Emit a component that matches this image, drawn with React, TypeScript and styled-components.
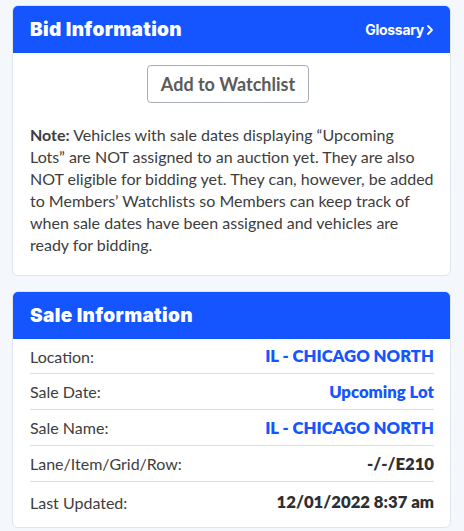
import React from "react";
import styled, { createGlobalStyle } from "styled-components";

const Global = createGlobalStyle`
  html, body { margin: 0; padding: 0; background: #f4f7fc; }
  body { font-family: Lato, "Open Sans", sans-serif; }
  * { box-sizing: border-box; }
`;

const Page = styled.div`
  padding: 5px 13px 8px 12px;
  display: flex;
  flex-direction: column;
  gap: 15px;
`;

const Card = styled.section`
  background: #fff;
  border: 1px solid #e1e5ec;
  border-radius: 6px;
  overflow: hidden;
`;

const Header = styled.header`
  background: #1555ff;
  height: 47px;
  display: flex;
  align-items: center;
  justify-content: space-between;
  padding: 0 16px 0 17px;
`;

const Title = styled.h2`
  margin: 0;
  color: #fff;
  font-family: Inter, sans-serif;
  font-weight: 900;
  font-size: 19px;
  letter-spacing: 0.35px;
`;

const HeaderLink = styled.a`
  color: #fff;
  font-family: Inter, sans-serif;
  font-weight: 700;
  font-size: 14px;
  display: flex;
  align-items: center;
  gap: 2px;
  letter-spacing: -0.3px;
`;

const BidBody = styled.div`
  padding: 12px 14px 19px 17px;
  display: flex;
  flex-direction: column;
  align-items: center;
`;

const Button = styled.button`
  height: 38px;
  padding: 0 13px;
  margin-right: 10px;
  border: 1px solid #a7adb7;
  border-radius: 4px;
  background: #fff;
  color: #5b5b5b;
  font-family: Lato, sans-serif;
  font-weight: 700;
  font-size: 18px;
`;

const Note = styled.p`
  margin: 21px 0 0;
  color: #3d3d3d;
  font-size: 16px;
  line-height: 22px;
  align-self: stretch;
  b { font-weight: 700; }
`;

const Rows = styled.div`
  padding: 0 16px 5px 17px;
`;

const Row = styled.div`
  display: flex;
  justify-content: space-between;
  align-items: center;
  height: 36px;
  border-bottom: 1px solid #dcdee2;
  font-size: 16px;
  &:first-child { height: 35px; }
  &:last-child { border-bottom: none; height: 40px; }
`;

const Label = styled.span`
  color: #3d3d3d;
`;

const Value = styled.span<{ $blue?: boolean }>`
  font-weight: 800;
  font-size: 16.7px;
  color: ${(p) => (p.$blue ? "#1555ff" : "#2f2f33")};
`;

const rows: { label: string; value: string; blue?: boolean }[] = [
  { label: "Location:", value: "IL - CHICAGO NORTH", blue: true },
  { label: "Sale Date:", value: "Upcoming Lot", blue: true },
  { label: "Sale Name:", value: "IL - CHICAGO NORTH", blue: true },
  { label: "Lane/Item/Grid/Row:", value: "-/-/E210" },
  { label: "Last Updated:", value: "12/01/2022 8:37 am" },
];

export default function App() {
  return (
    <>
      <Global />
      <Page>
        <Card>
          <Header>
            <Title>Bid Information</Title>
            <HeaderLink>
              Glossary
              <svg width="8" height="12" viewBox="0 0 8 12" fill="none">
                <path d="M2 2l4 4-4 4" stroke="#fff" strokeWidth="1.8" strokeLinecap="round" strokeLinejoin="round" />
              </svg>
            </HeaderLink>
          </Header>
          <BidBody>
            <Button>Add to Watchlist</Button>
            <Note>
              <b>Note:</b> Vehicles with sale dates displaying “Upcoming
              <br />
              Lots” are NOT assigned to an auction yet. They are also NOT eligible for bidding yet. They can, however, be added
              <br />
              to Members’ Watchlists so Members can keep track of when sale dates have been assigned and vehicles are ready for bidding.
            </Note>
          </BidBody>
        </Card>
        <Card>
          <Header>
            <Title>Sale Information</Title>
          </Header>
          <Rows>
            {rows.map((r) => (
              <Row key={r.label}>
                <Label>{r.label}</Label>
                <Value $blue={r.blue}>{r.value}</Value>
              </Row>
            ))}
          </Rows>
        </Card>
      </Page>
    </>
  );
}
